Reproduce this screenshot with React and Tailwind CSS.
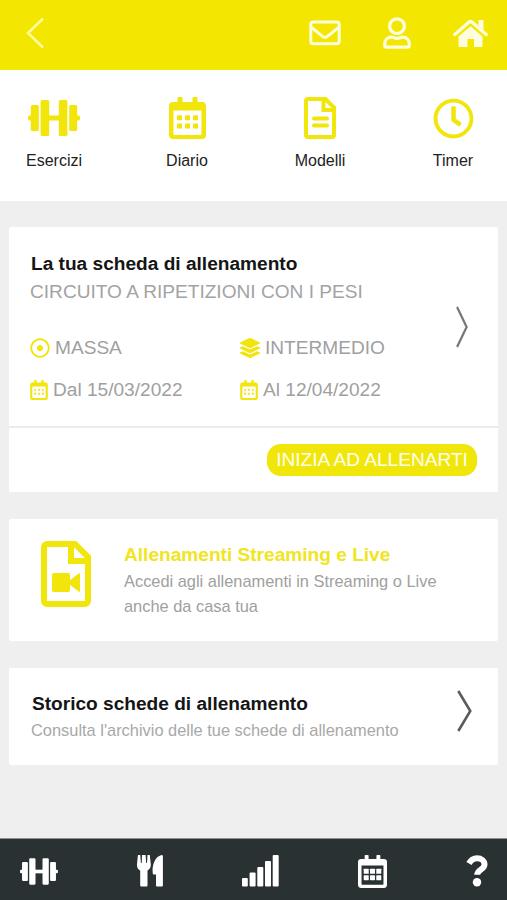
import React from "react";
import { FaLayerGroup, FaRegClock, FaRegDotCircle } from "react-icons/fa";

const DumbbellIcon = ({ className }) => (
  <svg viewBox="0 0 52 36" className={className} fill="currentColor">
    <rect x="0" y="15.5" width="5" height="5" rx="1.5" />
    <rect x="2.8" y="5" width="8" height="26" rx="1.5" />
    <rect x="12.6" y="0" width="8.6" height="36" rx="1.5" />
    <rect x="20" y="15.5" width="12" height="5" />
    <rect x="30.800" y="0" width="8.6" height="36" rx="1.5" />
    <rect x="41.200" y="5" width="8" height="26" rx="1.5" />
    <rect x="47" y="15.5" width="5" height="5" rx="1.5" />
  </svg>
);

const CalendarIcon = ({ className, dot = 5 }) => (
  <svg viewBox="0 0 37 42" className={className} fill="currentColor">
    <rect x="8.500" y="0" width="5" height="8" rx="1" />
    <rect x="23.500" y="0" width="5" height="8" rx="1" />
    <path
      fillRule="evenodd"
      d="M4 5h29a4 4 0 0 1 4 4v29a4 4 0 0 1-4 4H4a4 4 0 0 1-4-4V9a4 4 0 0 1 4-4zM4.500 13.500v23.500a1 1 0 0 0 1 1h26a1 1 0 0 0 1-1V13.500z"
    />
    {[20.8, 29].map((y) =>
      [10.5, 18.5, 26.5].map((x) => (
        <rect key={`${x}-${y}`} x={x - dot / 2} y={y - dot / 2} width={dot} height={dot} rx="0.6" />
      ))
    )}
  </svg>
);

const FileIcon = ({ className }) => (
  <svg viewBox="0 0 32 42" className={className} fill="none" stroke="currentColor" strokeWidth="4">
    <path d="M4 2h17.5L30 10.5V38a2 2 0 0 1-2 2H4a2 2 0 0 1-2-2V4a2 2 0 0 1 2-2z" />
    <path d="M19.5 2.5v10.5h10.5" />
    <path d="M10 21.5h13M10 28.5h13" strokeLinecap="round" />
  </svg>
);

const FileVideoIcon = ({ className }) => (
  <svg viewBox="0 0 50 66" className={className} fill="none" stroke="currentColor" strokeWidth="6">
    <path d="M6 3h28l13 13v44a3 3 0 0 1-3 3H6a3 3 0 0 1-3-3V6a3 3 0 0 1 3-3z" />
    <path d="M30 3v17h17" />
    <rect x="11" y="32" width="18" height="19" rx="2" fill="currentColor" stroke="none" />
    <path d="M28 40l9.500-7.500a1 1 0 0 1 1.500.8v16.400a1 1 0 0 1-1.500.8L28 43z" fill="currentColor" stroke="none" />
  </svg>
);

const EnvelopeIcon = ({ className }) => (
  <svg viewBox="0 0 32 26" className={className} fill="none" stroke="currentColor" strokeWidth="3">
    <rect x="1.8" y="2" width="28.400" height="21.800" rx="2.500" />
    <path d="M2.500 7.500l11 8.800a4 4 0 0 0 5 0l11-8.800" />
  </svg>
);

const UserIcon = ({ className }) => (
  <svg viewBox="0 0 28 32" className={className} fill="none" stroke="currentColor" strokeWidth="3.200">
    <circle cx="14" cy="9.200" r="7.400" />
    <path d="M8.500 20.200c2 0 3 1.200 5.500 1.200s3.500-1.200 5.500-1.200c4 0 6.800 3 6.800 7v1a1.900 1.900 0 0 1-1.900 1.900H3.600a1.900 1.900 0 0 1-1.900-1.900v-1c0-4 2.800-7 6.800-7z" />
  </svg>
);

const HomeIcon = ({ className }) => (
  <svg viewBox="0 0 35 28" className={className} fill="currentColor">
    <path d="M1.800 15.500L15.800 3.300a2.600 2.600 0 0 1 3.400 0l14 12.200" fill="none" stroke="currentColor" strokeWidth="3.400" strokeLinecap="round" />
    <path d="M25.500 1h5v10l-5-4.200z" />
    <path d="M17.500 7.200L29.500 17.500V27a1 1 0 0 1-1 1H21v-8h-6.500v8H6.500a1 1 0 0 1-1-1V17.500z" />
  </svg>
);

const UtensilsIcon = ({ className }) => (
  <svg viewBox="0 0 26 32" className={className} fill="currentColor">
    <path d="M.9 0h2.400l.6 8h.8L5.100 0h3.500l.6 8h.8L10.500 0h2.300l1 9.300c.2 3-1.200 5.200-3.300 6.200V30.500a1 1 0 0 1-1 1H4.200a1 1 0 0 1-1-1V15.500C1.200 14.500-.2 12.300 0 9.300z" />
    <path d="M24.600 0a1.300 1.300 0 0 1 1.300 1.300V30.500a1 1 0 0 1-1 1H20a1 1 0 0 1-1-1V19.500h-2.300a1 1 0 0 1-.9-1C14.800 10 18 1.500 24.600 0z" />
  </svg>
);

const SignalIcon = ({ className }) => (
  <svg viewBox="0 0 37 32" className={className} fill="currentColor">
    <rect x="0" y="23" width="5.800" height="8.500" rx="1" />
    <rect x="7.600" y="17.500" width="6" height="14" rx="1" />
    <rect x="15.300" y="12" width="6" height="19.500" rx="1" />
    <rect x="23" y="6" width="6" height="25.500" rx="1" />
    <rect x="30.700" y="0" width="6" height="31.500" rx="1" />
  </svg>
);

const QuestionIcon = ({ className }) => (
  <svg viewBox="0 0 22 32" className={className} fill="none">
    <path d="M3 8.500C5 4.800 7.500 3.200 11 3.200c4.200 0 7.500 2.600 7.500 6.300 0 5-7.300 5.200-7.300 10.300" stroke="currentColor" strokeWidth="6" />
    <circle cx="11" cy="27.300" r="4.200" fill="currentColor" />
  </svg>
);

const ChevronIcon = ({ className }) => (
  <svg viewBox="0 0 15 42" className={className} fill="none" stroke="currentColor" strokeWidth="2.600" preserveAspectRatio="none">
    <path d="M1.300 1l12 20-12 20" />
  </svg>
);

const menu = [
  { label: "Esercizi", icon: <DumbbellIcon className="w-[52px] h-9" /> },
  { label: "Diario", icon: <CalendarIcon className="w-[37px] h-[42px]" /> },
  { label: "Modelli", icon: <FileIcon className="w-8 h-[42px]" /> },
  { label: "Timer", icon: <FaRegClock className="w-[41px] h-[41px]" /> },
];

const details = [
  { label: "MASSA", icon: <FaRegDotCircle className="w-5 h-5" /> },
  { label: "INTERMEDIO", icon: <FaLayerGroup className="w-5 h-5" /> },
  { label: "Dal 15/03/2022", icon: <CalendarIcon className="w-[18px] h-5" dot={4} /> },
  { label: "Al 12/04/2022", icon: <CalendarIcon className="w-[18px] h-5" dot={4} /> },
];

const App = () => {
  return (
    <div className="w-[507px] h-[900px] flex flex-col overflow-hidden bg-[#efefef] font-['Liberation_Sans',Arial,sans-serif]">
      <header className="h-[70px] shrink-0 flex items-center justify-between bg-[#f3e600] pl-[26px] pr-[19px] pb-1 text-[#fffde0]">
        <svg viewBox="0 0 18 30" className="w-[18px] h-[30px]" fill="none" stroke="#fffaa0" strokeWidth="2.600">
          <path d="M17 0.500L2 15l15 14.500" />
        </svg>
        <div className="flex items-center gap-[42px]">
          <EnvelopeIcon className="w-8 h-[26px]" />
          <UserIcon className="w-7 h-8" />
          <HomeIcon className="w-[35px] h-7" />
        </div>
      </header>

      <nav className="h-[131px] shrink-0 flex justify-between bg-white px-[25px] pt-[27px]">
        {menu.map((m) => (
          <button key={m.label} className="w-[58px] flex flex-col items-center">
            <span className="h-[42px] flex items-center text-[#f1e50c]">{m.icon}</span>
            <span className="mt-[10px] text-base leading-6 text-[#222222]">{m.label}</span>
          </button>
        ))}
      </nav>

      <main className="flex-1 flex flex-col gap-[27px] pt-[26px] px-[9px]">
        <section className="h-[265px] bg-white rounded-xs">
          <div className="h-[201px] flex justify-between border-b-2 border-[#ebebeb] pl-[21px] pr-[30px] pt-[23px]">
            <div>
              <h2 className="pl-px text-[19.1px] leading-7 font-bold text-[#151515] whitespace-nowrap">La tua scheda di allenamento</h2>
              <p className="text-[19.1px] leading-7 text-[#a3a3a3] whitespace-nowrap">CIRCUITO A RIPETIZIONI CON I PESI</p>
              <div className="mt-7 grid grid-cols-[210px_170px] gap-y-[14px]">
                {details.map((d) => (
                  <div key={d.label} className="flex items-center gap-[5px] text-[19.1px] leading-7 text-[#a0a0a0]">
                    <span className="text-[#f1e50c]">{d.icon}</span>
                    {d.label}
                  </div>
                ))}
              </div>
            </div>
            <ChevronIcon className="w-3 h-[42px] mt-14 shrink-0 text-[#777777]" />
          </div>
          <div className="flex justify-end pt-4 pr-[21px]">
            <button className="w-[210px] h-8 rounded-[14px] bg-[#f1e60a] text-[19.1px] leading-8 text-[#fffff0] whitespace-nowrap">
              INIZIA AD ALLENARTI
            </button>
          </div>
        </section>

        <section className="h-[122px] flex items-start gap-[33px] bg-white rounded-xs pl-8 pt-[22px]">
          <FileVideoIcon className="w-[50px] h-[66px] shrink-0 text-[#f1e50c]" />
          <div>
            <h2 className="text-[19.1px] leading-7 font-bold text-[#f0e520]">Allenamenti Streaming e Live</h2>
            <p className="w-[330px] text-[16.4px] leading-[24.5px] text-[#a0a0a0]">
              Accedi agli allenamenti in Streaming o Live anche da casa tua
            </p>
          </div>
        </section>

        <section className="h-[97px] flex items-start justify-between bg-white rounded-xs pl-[22px] pr-[26px] pt-[22px]">
          <div>
            <h2 className="pl-px text-[19.1px] leading-7 font-bold text-[#151515]">Storico schede di allenamento</h2>
            <p className="text-[16.4px] leading-6 text-[#a8a8a8] whitespace-nowrap">
              Consulta l'archivio delle tue schede di allenamento
            </p>
          </div>
          <ChevronIcon className="w-[15px] h-[42px] shrink-0 text-[#5c5c5c]" />
        </section>
      </main>

      <footer className="h-[62px] shrink-0 flex items-center justify-between bg-[#2a3133] border-t border-[#8c8f90] pl-5 pr-[19px] pt-[3px] text-white">
        <DumbbellIcon className="w-[38px] h-[27px]" />
        <UtensilsIcon className="w-[26px] h-8" />
        <SignalIcon className="w-[37px] h-8" />
        <CalendarIcon className="w-[29px] h-[33px]" dot={6.4} />
        <QuestionIcon className="w-[22px] h-8" />
      </footer>
    </div>
  );
};

export default App;
